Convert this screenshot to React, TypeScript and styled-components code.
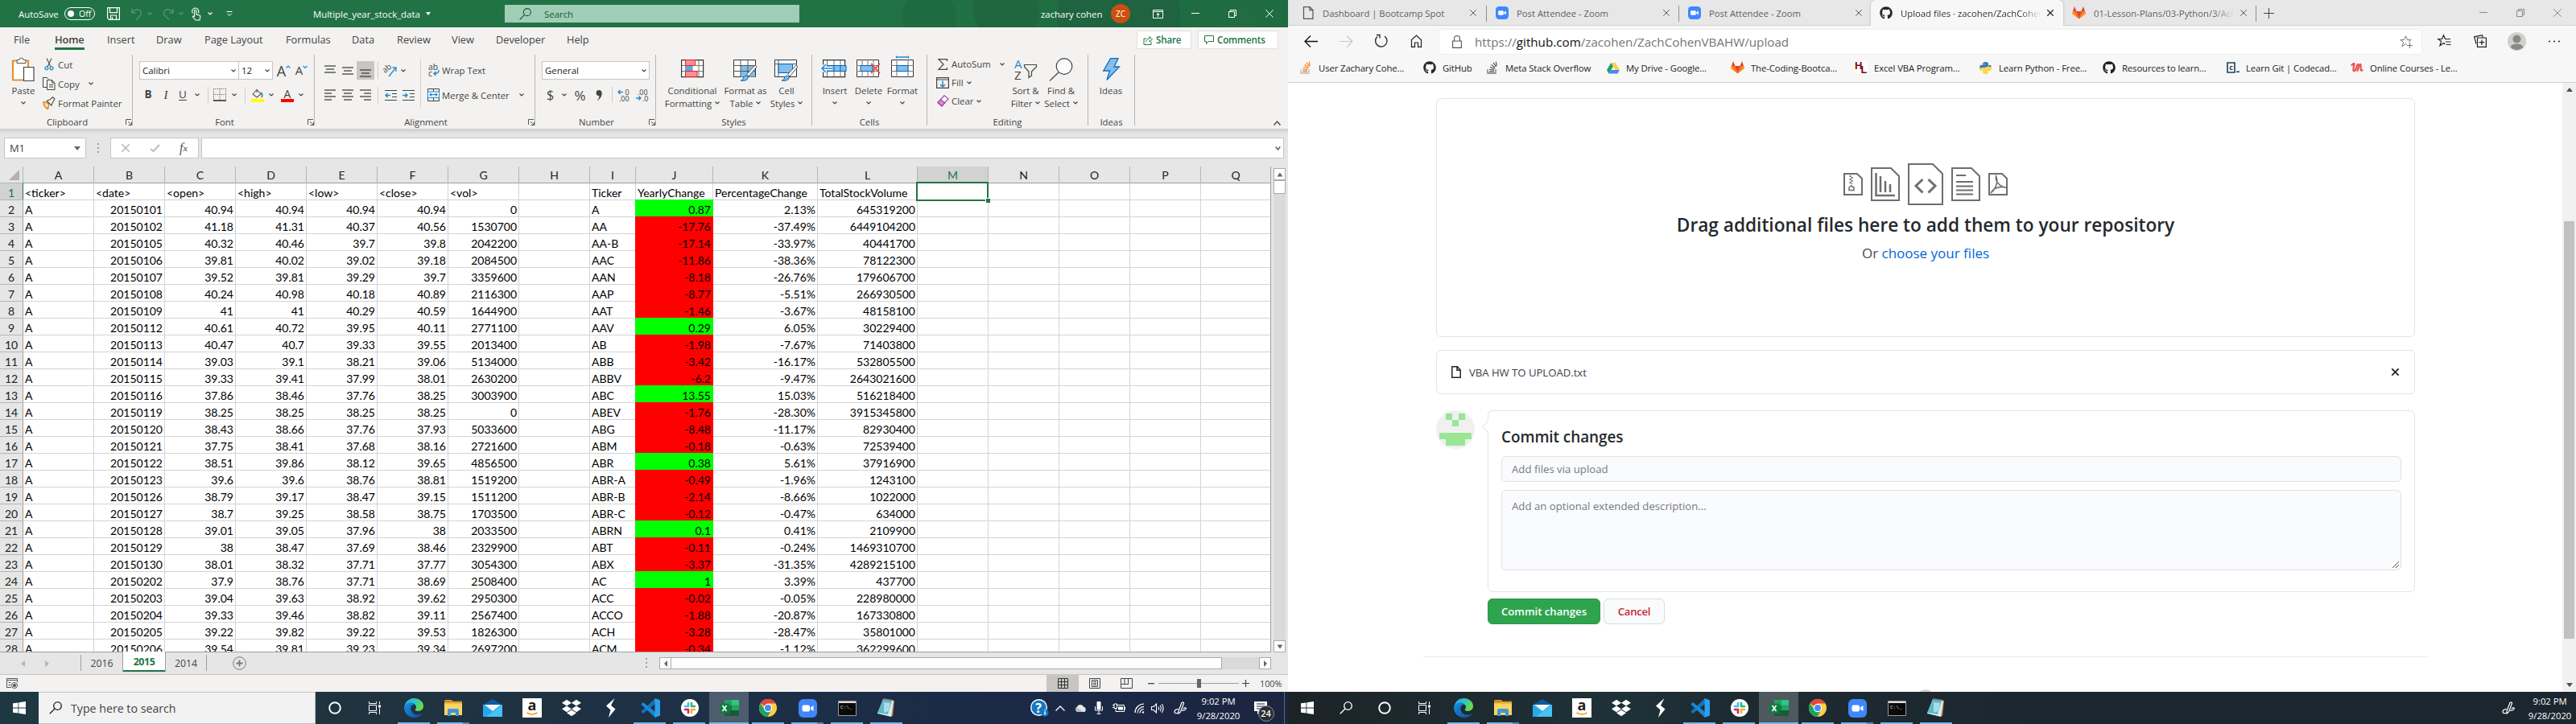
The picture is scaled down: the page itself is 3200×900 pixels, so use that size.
import React from 'react';
import styled, { createGlobalStyle, css } from 'styled-components';
import { FaGithub, FaDropbox, FaPython } from 'react-icons/fa';

const UI = `"Open Sans", "Noto Sans", sans-serif`;
const SHEET = `Lato, "Open Sans", sans-serif`;

const GlobalStyle = createGlobalStyle`
  * { box-sizing: border-box; }
  html, body { margin: 0; padding: 0; }
  body { width: 3200px; height: 900px; overflow: hidden; background: #fff; font-family: ${UI}; font-size: 11.4px; color: #444; }
  svg { display: block; flex: none; overflow: visible; }
`;

/* ---------- shared parts ---------- */

const Desktop = styled.div`
  display: flex;
  width: 3200px;
  height: 900px;
  overflow: hidden;
`;

const Monitor = styled.div`
  display: flex;
  flex-direction: column;
  width: 1600px;
  height: 900px;
  overflow: hidden;
`;

const BarItem = styled.div<{ $w?: number; $lead?: number; $start?: boolean }>`
  display: flex;
  flex: none;
  align-items: center;
  justify-content: ${(p) => (p.$start ? 'flex-start' : 'center')};
  width: ${(p) => (p.$w ? `${p.$w}px` : 'auto')};
  margin-left: ${(p) => p.$lead || 0}px;
  white-space: nowrap;
`;

const Chevron = ({ color = '#444', w = 6, lead = 0 }: { color?: string; w?: number; lead?: number }) => (
  <BarItem $w={w} $lead={lead}>
    <svg width={w} height={w * 0.66} viewBox="0 0 6 4" fill="none" stroke={color} strokeWidth="1.2">
      <path d="M.5 .5 3 3 5.5 .5" />
    </svg>
  </BarItem>
);

/* ---------- Excel title bar ---------- */

const TitleBar = styled.div`
  display: flex;
  align-items: center;
  height: 34px;
  flex: none;
  padding-left: 23px;
  color: #fff;
  background:
    radial-gradient(circle at 1154px 20px, #1e6b41 0 33px, transparent 34px),
    radial-gradient(circle at 1250px 12px, #20663f 0 40px, transparent 41px),
    radial-gradient(circle at 1390px 24px, #1f6340 0 76px, transparent 77px),
    radial-gradient(circle at 1538px 30px, #226c44 0 24px, transparent 25px),
    linear-gradient(90deg, #217346 0 1050px, #1e6e42 1300px, #1f6b42 1600px);
`;

const Toggle = styled.div`
  display: flex;
  align-items: center;
  width: 38px;
  height: 16px;
  margin-left: 7px;
  padding-left: 3px;
  border: 1.5px solid #fff;
  border-radius: 8px;
  font-size: 10.5px;
  line-height: 12px;
`;
const Knob = styled.i`
  width: 8px;
  height: 8px;
  margin-right: 6px;
  border-radius: 50%;
  background: #fff;
`;

const TitleSearch = styled.div`
  display: flex;
  align-items: center;
  width: 366px;
  height: 22px;
  margin-left: 92px;
  padding-left: 18px;
  gap: 16px;
  background: #a0cdb5;
  color: #0f5c34;
`;

const UserBadge = styled.div`
  display: flex;
  align-items: center;
  justify-content: center;
  width: 24px;
  height: 24px;
  margin-left: 11px;
  border-radius: 50%;
  background: #ca5010;
  font-size: 10px;
`;

const Magnifier = ({ size = 15, color = '#0f5c34', sw = 1.2 }: { size?: number; color?: string; sw?: number }) => (
  <svg width={size} height={size} viewBox="0 0 16 16" fill="none" stroke={color} strokeWidth={sw}>
    <circle cx="10.5" cy="5.5" r="4.8" />
    <path d="M7 9 .8 15.2" />
  </svg>
);

const RestoreIcon = ({ color = '#fff' }: { color?: string }) => (
  <svg width="10" height="10" viewBox="0 0 10 10" fill="none" stroke={color}>
    <path d="M.5 2.5h7v7h-7zM2.5 2.5v-2h7v7h-2" />
  </svg>
);
const CrossIcon = ({ color = '#fff', size = 10, sw = 1 }: { color?: string; size?: number; sw?: number }) => (
  <svg width={size} height={size} viewBox="0 0 10 10" fill="none" stroke={color} strokeWidth={sw}>
    <path d="M.3 .3l9.4 9.4M9.7 .3 .3 9.7" />
  </svg>
);
const MinusIcon = ({ color = '#fff' }: { color?: string }) => (
  <svg width="10" height="2" viewBox="0 0 10 2"><path d="M0 0h10v1H0z" fill={color} /></svg>
);

const ExcelTitle = () => (
  <TitleBar>
    <BarItem $w={50} $start>AutoSave</BarItem>
    <Toggle><Knob />Off</Toggle>
    <BarItem $w={16} $lead={15}>
      <svg width="16" height="16" viewBox="0 0 16 16" fill="none" stroke="#fff" strokeWidth="1.2">
        <path d="M.6 .6h14.8v14.8H2.6l-2-2zM3.5 .6v6h9v-6M4.5 15.4V10h7v5.4M6.5 12v3" />
      </svg>
    </BarItem>
    <BarItem $w={14} $lead={14}>
      <svg width="14" height="15" viewBox="0 0 14 15" fill="none" stroke="#5b9a78" strokeWidth="1.2">
        <path d="M1 1v5h5M1.2 5.8C4 1 10 .8 12 4s-1 6-6 10.5" />
      </svg>
    </BarItem>
    <Chevron color="#5b9a78" lead={6} />
    <BarItem $w={14} $lead={13}>
      <svg width="14" height="15" viewBox="0 0 14 15" fill="none" stroke="#5b9a78" strokeWidth="1.2">
        <path d="M13 1v5H8M12.8 5.8C10 1 4 .8 2 4s1 6 6 10.5" />
      </svg>
    </BarItem>
    <Chevron color="#5b9a78" lead={6} />
    <BarItem $w={13} $lead={9}>
      <svg width="13" height="17" viewBox="0 0 13 17" fill="none" stroke="#fff" strokeWidth="1.1">
        <path d="M4.5 12V4.5a1.2 1.2 0 0 1 2.4 0V9l4 1c1 .3 1 1 .9 2l-.8 4H6l-3.5-4c-.6-1 .6-1.7 2 0" />
        <path d="M2.5 7.5a4 4 0 1 1 6.5 0" />
      </svg>
    </BarItem>
    <Chevron color="#fff" lead={8} />
    <BarItem $w={8} $lead={17}>
      <svg width="8" height="7" viewBox="0 0 8 7" fill="none" stroke="#fff"><path d="M.5 .5h7M1.5 3 4 5.5 6.5 3" /></svg>
    </BarItem>
    <BarItem $w={132} $lead={100} $start>Multiple_year_stock_data</BarItem>
    <BarItem $w={7} $lead={7}>
      <svg width="6" height="4" viewBox="0 0 6 4"><path d="M0 0h6L3 4z" fill="#fff" /></svg>
    </BarItem>
    <TitleSearch><Magnifier />Search</TitleSearch>
    <BarItem $w={76} $lead={300} $start>zachary cohen</BarItem>
    <UserBadge>ZC</UserBadge>
    <BarItem $w={13} $lead={28}>
      <svg width="13" height="11" viewBox="0 0 13 11" fill="none" stroke="#fff">
        <path d="M.5 .5h12v10H.5zM.5 2.5h12M6.5 9V4.5M4.5 6.5l2-2 2 2" />
      </svg>
    </BarItem>
    <BarItem $w={10} $lead={35}><MinusIcon /></BarItem>
    <BarItem $w={10} $lead={36}><RestoreIcon /></BarItem>
    <BarItem $w={10} $lead={36}><CrossIcon /></BarItem>
  </TitleBar>
);

/* ---------- Excel ribbon ---------- */

const Ribbon = styled.div`
  display: flex;
  flex-direction: column;
  flex: none;
  height: 126px;
  background: #f3f2f1;
`;
const TabRow = styled.div`
  display: flex;
  align-items: flex-start;
  height: 34px;
  padding: 5px 12px 0 17px;
  font-size: 12.8px;
`;
const RibbonTab = styled.div<{ $w: number; $active?: boolean }>`
  flex: none;
  width: ${(p) => p.$w}px;
  line-height: 21px;
  white-space: nowrap;
  span {
    display: inline-block;
    height: 23px;
    font-weight: ${(p) => (p.$active ? 600 : 400)};
    letter-spacing: ${(p) => (p.$active ? '-0.1px' : '0')};
    border-bottom: ${(p) => (p.$active ? '3px solid #217346' : 'none')};
  }
`;
const RibbonAction = styled.div<{ $w: number; $lead: number }>`
  display: flex;
  align-items: center;
  gap: 4px;
  width: ${(p) => p.$w}px;
  height: 23px;
  margin-left: ${(p) => p.$lead}px;
  margin-top: -1px;
  padding-left: 7px;
  background: #fff;
  border: 1px solid #e1dfdd;
  border-radius: 2px;
  color: #217346;
  font-size: 11.6px;
  font-weight: 600;
  letter-spacing: -0.15px;
`;

const GroupRow = styled.div`
  display: flex;
  height: 88px;
`;
const Group = styled.div<{ $w: number }>`
  display: flex;
  flex-direction: column;
  flex: none;
  width: ${(p) => p.$w}px;
  height: 88px;
  border-right: 1px solid #b8b6b4;
`;
const GroupBody = styled.div<{ $pad?: number }>`
  display: flex;
  flex: none;
  height: 80px;
  padding-left: ${(p) => p.$pad || 0}px;
`;
const GroupLabel = styled.div`
  display: flex;
  align-items: center;
  height: 8px;
  span { flex: 1; text-align: center; font-size: 11.3px; line-height: 8px; }
`;
const Launcher = () => (
  <BarItem $w={8} $lead={-11}>
    <svg width="8" height="8" viewBox="0 0 8 8" fill="none" stroke="#555"><path d="M.5 7V.5H7M3 3l4 4M7.5 3.5v4h-4" /></svg>
  </BarItem>
);

const LargeButton = styled.div<{ $w: number; $lead?: number }>`
  display: flex;
  flex-direction: column;
  align-items: center;
  flex: none;
  width: ${(p) => p.$w}px;
  margin-left: ${(p) => p.$lead || 0}px;
  white-space: nowrap;
`;
const LargeIcon = styled.div`
  display: flex;
  align-items: center;
  justify-content: center;
  height: 36px;
`;
const LargeLine = styled.div`
  display: flex;
  align-items: center;
  gap: 4px;
  height: 16px;
`;
const SmallColumn = styled.div<{ $lead?: number; $rowH: number }>`
  display: grid;
  grid-auto-rows: ${(p) => p.$rowH}px;
  align-content: start;
  margin-left: ${(p) => p.$lead || 0}px;
`;
const SmallButton = styled.div`
  display: flex;
  align-items: center;
  white-space: nowrap;
`;
const ToolRows = styled.div<{ $lead?: number }>`
  display: flex;
  flex-direction: column;
  padding-top: 8px;
  gap: 9px;
  margin-left: ${(p) => p.$lead || 0}px;
`;
const ToolRow = styled.div<{ $h: number }>`
  display: flex;
  align-items: center;
  height: ${(p) => p.$h}px;
`;
const Combo = styled.div<{ $w: number }>`
  display: flex;
  align-items: center;
  justify-content: space-between;
  width: ${(p) => p.$w}px;
  height: 23px;
  padding: 0 3px;
  background: #fff;
  border: 1px solid #c8c6c4;
  color: #222;
  & + & { border-left: 0; }
`;
const ToolDivider = styled.i<{ $h: number; $lead: number; $top?: number }>`
  flex: none;
  width: 1px;
  height: ${(p) => p.$h}px;
  margin-left: ${(p) => p.$lead}px;
  margin-top: ${(p) => p.$top || 0}px;
  background: #d0cecc;
`;
const Glyph = styled.span<{ $size: number; $bold?: boolean; $italic?: boolean; $under?: boolean; $color?: string }>`
  font-size: ${(p) => p.$size}px;
  line-height: 1;
  color: ${(p) => p.$color || '#444'};
  font-weight: ${(p) => (p.$bold ? 700 : 400)};
  font-style: ${(p) => (p.$italic ? 'italic' : 'normal')};
  font-family: ${(p) => (p.$italic ? '"Liberation Serif", serif' : UI)};
  text-decoration: ${(p) => (p.$under ? 'underline' : 'none')};
  text-underline-offset: 2px;
`;
const PressedTool = styled.div`
  display: flex;
  align-items: center;
  justify-content: center;
  width: 22px;
  height: 23px;
  margin-left: 4px;
  background: #c8c6c4;
`;

const Lines = ({ rows, w = 14, h = 12 }: { rows: [number, number, number][]; w?: number; h?: number }) => (
  <svg width={w} height={h} viewBox={`0 0 ${w} ${h}`} stroke="#333" strokeWidth="1.2">
    {rows.map(([x1, x2, y]) => <path key={y} d={`M${x1} ${y}H${x2}`} />)}
  </svg>
);

const Brush = ({ x, y }: { x: number; y: number }) => (
  <g transform={`translate(${x} ${y})`}>
    <path d="M19 0 21 2 11 14 8.5 11.5z" fill="#fff" stroke="#555" />
    <path d="M1 19c3-.5 3-2 4-4.5 1.5-2 4.5-1.5 5 .5 .5 3-3 5-9 4z" fill="#83beec" stroke="#0063b1" />
  </g>
);

const MiniTable = ({ children, off = 0 }: { children?: React.ReactNode; off?: number }) => (
  <svg width="30" height="30" viewBox="0 0 30 30">
    <g transform={`translate(${off} 0)`}>
      <path d="M.5 3.5h27v21H.5z" fill="#fff" />
      <path d="M5.5 3v22M14 3v22M22 3v22M0 10.5h28M0 17.5h28" stroke="#777" fill="none" />
      <path d="M.6 3.6h27v21H.6z" fill="none" stroke="#333" strokeWidth="1.2" />
      {children}
    </g>
  </svg>
);

const ExcelRibbon = () => (
  <Ribbon>
    <TabRow>
      <RibbonTab $w={51}><span>File</span></RibbonTab>
      <RibbonTab $w={65} $active><span>Home</span></RibbonTab>
      <RibbonTab $w={61}><span>Insert</span></RibbonTab>
      <RibbonTab $w={60}><span>Draw</span></RibbonTab>
      <RibbonTab $w={101}><span>Page Layout</span></RibbonTab>
      <RibbonTab $w={82}><span>Formulas</span></RibbonTab>
      <RibbonTab $w={56}><span>Data</span></RibbonTab>
      <RibbonTab $w={68}><span>Review</span></RibbonTab>
      <RibbonTab $w={55}><span>View</span></RibbonTab>
      <RibbonTab $w={88}><span>Developer</span></RibbonTab>
      <RibbonTab $w={40}><span>Help</span></RibbonTab>
      <RibbonAction $w={68} $lead={668}>
        <svg width="12" height="12" viewBox="0 0 12 12" fill="none" stroke="#217346"><path d="M4 4H1v7.5h9V8M3.5 8.5C4 5 6 4 8 4V1.5L11.5 5 8 8V6" /></svg>
        Share
      </RibbonAction>
      <RibbonAction $w={100} $lead={8}>
        <svg width="12" height="11" viewBox="0 0 12 11" fill="none" stroke="#217346"><path d="M.5 .5h11v7H5l-2.5 3v-3h-2z" /></svg>
        Comments
      </RibbonAction>
    </TabRow>
    <GroupRow>
      <Group $w={165}>
        <GroupBody>
          <LargeButton $w={32} $lead={13}>
            <LargeIcon>
              <svg width="30" height="30" viewBox="0 0 30 30" fill="none">
                <path d="M2 4.5h19v24H2z" fill="#fff" stroke="#e8912d" strokeWidth="2.2" />
                <path d="M7 3.5h3a2.5 2.5 0 0 1 5 0h3v4H7z" fill="#fff" stroke="#555" />
                <path d="M15.5 12.5h12.5v17H15.5z" fill="#fff" stroke="#444" strokeWidth="1.2" />
              </svg>
            </LargeIcon>
            <LargeLine>Paste</LargeLine>
            <LargeLine><Chevron /></LargeLine>
          </LargeButton>
          <SmallColumn $lead={8} $rowH={24}>
            <SmallButton>
              <BarItem $w={16}>
                <svg width="12" height="16" viewBox="0 0 12 16" fill="none">
                  <path d="M3 .5 8 11M9 .5 4 11" stroke="#555" strokeWidth="1.2" />
                  <circle cx="2.8" cy="12.8" r="1.9" stroke="#1e8bcd" strokeWidth="1.3" /><circle cx="9" cy="12.8" r="1.9" stroke="#1e8bcd" strokeWidth="1.3" />
                </svg>
              </BarItem>
              <BarItem $lead={3}>Cut</BarItem>
            </SmallButton>
            <SmallButton>
              <BarItem $w={16}>
                <svg width="16" height="16" viewBox="0 0 16 16" fill="none" stroke="#444">
                  <path d="M5 12.5H.5V.5h5l2 2M5.5 3.5h6l3.5 3.5v8.5H5.5zM11.5 3.5V7H15M8 9.5h5M8 12h5" />
                </svg>
              </BarItem>
              <BarItem $lead={3} $w={28} $start>Copy</BarItem>
              <Chevron lead={10} />
            </SmallButton>
            <SmallButton>
              <BarItem $w={16}>
                <svg width="16" height="16" viewBox="0 0 16 16" fill="none">
                  <path d="M1 6.5 8 9l-1.5 6.5C3 14 1 11 1 6.5z" fill="#fbd9a8" stroke="#e07b16" strokeWidth="1.3" />
                  <path d="M5 5.5 11 11l1.5-4L15 3 12.5 .8 9 4z" fill="#fff" stroke="#444" strokeWidth="1.1" />
                </svg>
              </BarItem>
              <BarItem $lead={3}>Format Painter</BarItem>
            </SmallButton>
          </SmallColumn>
        </GroupBody>
        <GroupLabel><span>Clipboard</span><Launcher /></GroupLabel>
      </Group>

      <Group $w={226}>
        <GroupBody $pad={8}>
          <ToolRows>
            <ToolRow $h={23}>
              <Combo $w={124}>Calibri<Chevron /></Combo>
              <Combo $w={42}>12<Chevron /></Combo>
              <BarItem $w={17} $lead={5}>
                <Glyph $size={18}>A</Glyph>
                <svg width="6" height="14" viewBox="0 0 6 14" fill="none" stroke="#1e8bcd" strokeWidth="1.2"><path d="M.5 3.5 3 1l2.5 2.5" /></svg>
              </BarItem>
              <BarItem $w={15} $lead={6}>
                <Glyph $size={15}>A</Glyph>
                <svg width="6" height="14" viewBox="0 0 6 14" fill="none" stroke="#1e8bcd" strokeWidth="1.2"><path d="M.5 1 3 3.5 5.5 1" /></svg>
              </BarItem>
            </ToolRow>
            <ToolRow $h={20}>
              <BarItem $w={8} $lead={7}><Glyph $size={13.5} $bold>B</Glyph></BarItem>
              <BarItem $w={8} $lead={14}><Glyph $size={15} $italic>I</Glyph></BarItem>
              <BarItem $w={10} $lead={12}><Glyph $size={13.5} $under>U</Glyph></BarItem>
              <Chevron lead={10} />
              <ToolDivider $h={20} $lead={10} />
              <BarItem $w={16} $lead={6}>
                <svg width="16" height="16" viewBox="0 0 16 16" fill="none" stroke="#444">
                  <path d="M0 .5h16M.5 0v14M15.5 0v14M8 0v14M0 7.5h16" strokeDasharray="1 1.5" />
                  <path d="M0 15h16" strokeWidth="1.8" />
                </svg>
              </BarItem>
              <Chevron lead={7} />
              <ToolDivider $h={20} $lead={10} />
              <BarItem $w={16} $lead={7}>
                <svg width="16" height="17" viewBox="0 0 16 17" fill="none">
                  <path d="M2 7 7 1.5 12 7 7 11z M7 1.5V5" stroke="#555" strokeWidth="1.1" />
                  <path d="M12 5c2 1.5 2 4 1 6" stroke="#1e8bcd" strokeWidth="1.7" />
                  <path d="M0 13h16v4H0z" fill="#ff0" />
                </svg>
              </BarItem>
              <Chevron lead={6} />
              <BarItem $w={16} $lead={9}>
                <svg width="16" height="17" viewBox="0 0 16 17">
                  <text x="8" y="11.5" textAnchor="middle" fontSize="14" fill="#444">A</text>
                  <path d="M0 13h16v4H0z" fill="#f00" />
                </svg>
              </BarItem>
              <Chevron lead={6} />
            </ToolRow>
          </ToolRows>
        </GroupBody>
        <GroupLabel><span>Font</span><Launcher /></GroupLabel>
      </Group>

      <Group $w={274}>
        <GroupBody $pad={12}>
          <ToolRows>
            <ToolRow $h={23}>
              <BarItem $w={14}><Lines rows={[[0, 14, 0], [2, 12, 4], [0, 14, 8]]} /></BarItem>
              <BarItem $w={14} $lead={8}><Lines rows={[[0, 14, 2], [2, 12, 6], [0, 14, 10]]} /></BarItem>
              <PressedTool><Lines rows={[[0, 14, 5], [2, 12, 9], [0, 14, 13]]} /></PressedTool>
              <ToolDivider $h={21} $lead={4} />
              <BarItem $w={16} $lead={7}>
                <svg width="16" height="17" viewBox="0 0 16 17" fill="none">
                  <text x="0" y="9" fontSize="10" fill="#444" transform="rotate(-40 5 9)">ab</text>
                  <path d="M6 16 15 5M15 10V5h-4.5" stroke="#1e8bcd" strokeWidth="1.3" />
                </svg>
              </BarItem>
              <Chevron lead={5} />
            </ToolRow>
            <ToolRow $h={20}>
              <BarItem $w={14}><Lines rows={[[0, 14, 0], [0, 9, 4], [0, 14, 8], [0, 9, 12]]} /></BarItem>
              <BarItem $w={14} $lead={8}><Lines rows={[[0, 14, 0], [2, 12, 4], [0, 14, 8], [2, 12, 12]]} /></BarItem>
              <BarItem $w={14} $lead={8}><Lines rows={[[0, 14, 0], [5, 14, 4], [0, 14, 8], [5, 14, 12]]} /></BarItem>
              <ToolDivider $h={21} $lead={8} />
              <BarItem $w={15} $lead={8}>
                <svg width="15" height="13" viewBox="0 0 15 13" fill="none">
                  <path d="M0 .5h15M9 4.5h6M9 8.5h6M0 12.5h15" stroke="#444" />
                  <path d="M7 6.5H1M3.5 4 1 6.5 3.5 9" stroke="#1e8bcd" strokeWidth="1.4" />
                </svg>
              </BarItem>
              <BarItem $w={15} $lead={7}>
                <svg width="15" height="13" viewBox="0 0 15 13" fill="none">
                  <path d="M0 .5h15M9 4.5h6M9 8.5h6M0 12.5h15" stroke="#444" />
                  <path d="M0 6.5h6M3.5 4 6 6.5 3.5 9" stroke="#1e8bcd" strokeWidth="1.4" />
                </svg>
              </BarItem>
            </ToolRow>
          </ToolRows>
          <ToolDivider $h={59} $lead={7} $top={6} />
          <ToolRows $lead={8}>
            <ToolRow $h={23}>
              <BarItem $w={15}>
                <svg width="14" height="18" viewBox="0 0 14 18" fill="none">
                  <text x="0" y="8" fontSize="10.5" fill="#444">ab</text>
                  <text x="0" y="16" fontSize="10.5" fill="#444">c</text>
                  <path d="M13 8c.5 3-1.5 4.5-6 4.500M9.5 10 7 12.500 9.5 15" stroke="#1e8bcd" strokeWidth="1.4" />
                </svg>
              </BarItem>
              <BarItem $lead={3}>Wrap Text</BarItem>
            </ToolRow>
            <ToolRow $h={20}>
              <BarItem $w={15}>
                <svg width="15" height="16" viewBox="0 0 15 16" fill="none">
                  <path d="M.5 .5h14v15H.5zM7.5 0v4M7.5 12v4" stroke="#444" />
                  <path d="M.5 4h14v7.5H.5z" fill="#fff" stroke="#1e8bcd" />
                  <path d="M3 7.7h9M5 5.7l-2 2 2 2M10 5.7l2 2-2 2" stroke="#1e8bcd" strokeWidth="1.2" />
                </svg>
              </BarItem>
              <BarItem $lead={3} $w={86} $start>Merge &amp; Center</BarItem>
              <Chevron lead={10} />
            </ToolRow>
          </ToolRows>
        </GroupBody>
        <GroupLabel><span>Alignment</span><Launcher /></GroupLabel>
      </Group>

      <Group $w={150}>
        <GroupBody $pad={8}>
          <ToolRows>
            <ToolRow $h={23}><Combo $w={134}>General<Chevron /></Combo></ToolRow>
            <ToolRow $h={20}>
              <BarItem $w={9} $lead={6}><Glyph $size={16}>$</Glyph></BarItem>
              <Chevron lead={10} />
              <BarItem $w={15} $lead={9}><Glyph $size={17}>%</Glyph></BarItem>
              <BarItem $w={8} $lead={12}>
                <svg width="8" height="13" viewBox="0 0 8 13"><path d="M4 0a3.5 3.5 0 0 1 3.7 3.7C7.7 8 5 11.5 1.5 13 4 10.5 4.5 8.5 4.5 7.2A3.6 3.6 0 1 1 4 0z" fill="#444" /></svg>
              </BarItem>
              <ToolDivider $h={20} $lead={12} />
              <BarItem $w={16} $lead={6}>
                <svg width="16" height="16" viewBox="0 0 16 16" fill="none">
                  <path d="M7 4.5H1M3.5 2 1 4.5 3.5 7" stroke="#1e8bcd" strokeWidth="1.3" />
                  <text x="9.5" y="7.5" fontSize="9" fill="#444">0</text><text x="2" y="16" fontSize="9" fill="#444">.00</text>
                </svg>
              </BarItem>
              <BarItem $w={16} $lead={7}>
                <svg width="16" height="16" viewBox="0 0 16 16" fill="none">
                  <path d="M0 12h6M3.5 9.5 6 12l-2.500 2.500" stroke="#1e8bcd" strokeWidth="1.3" />
                  <text x="2" y="7.5" fontSize="9" fill="#444">.00</text><text x="8" y="16" fontSize="9" fill="#444">.0</text>
                </svg>
              </BarItem>
            </ToolRow>
          </ToolRows>
        </GroupBody>
        <GroupLabel><span>Number</span><Launcher /></GroupLabel>
      </Group>

      <Group $w={194}>
        <GroupBody>
          <LargeButton $w={70} $lead={10}>
            <LargeIcon>
              <MiniTable off={1}>
                <path d="M5.5 3.5h12v7h-12zM5.5 17.5H20v7H5.5z" fill="#ff8d92" stroke="#d62a2a" />
                <path d="M5.5 11H14v6H5.5z" fill="#5ba9e6" />
              </MiniTable>
            </LargeIcon>
            <LargeLine>Conditional</LargeLine>
            <LargeLine>Formatting<Chevron /></LargeLine>
          </LargeButton>
          <LargeButton $w={56} $lead={3}>
            <LargeIcon>
              <svg width="30" height="30" viewBox="0 0 30 30">
                <path d="M.5 3.5h27v21H.5z" fill="#fff" stroke="#333" />
                <path d="M9 10.5h18v14H9z" fill="#83beec" />
                <path d="M9 3v22M18 3v22M0 10.5h28M0 17.5h28" stroke="#555" />
                <Brush x={8} y={10} />
              </svg>
            </LargeIcon>
            <LargeLine>Format as</LargeLine>
            <LargeLine>Table<Chevron /></LargeLine>
          </LargeButton>
          <LargeButton $w={44} $lead={1}>
            <LargeIcon>
              <svg width="30" height="30" viewBox="0 0 30 30">
                <path d="M.5 3.5h27v21H.5z" fill="#fff" stroke="#333" />
                <path d="M5 3v22M0 8.5h28" stroke="#555" />
                <path d="M5 8.5h17.5v11H5z" fill="#83beec" stroke="#0063b1" />
                <Brush x={8} y={10} />
              </svg>
            </LargeIcon>
            <LargeLine>Cell</LargeLine>
            <LargeLine>Styles<Chevron /></LargeLine>
          </LargeButton>
        </GroupBody>
        <GroupLabel><span>Styles</span></GroupLabel>
      </Group>

      <Group $w={143}>
        <GroupBody>
          <LargeButton $w={34} $lead={11}>
            <LargeIcon>
              <MiniTable>
                <path d="M5 10.5h24v7H5z" fill="#83beec" stroke="#0063b1" />
                <path d="M14 10.5v7M22 10.5v7" stroke="#0063b1" />
                <path d="M12 14H-1M4 9-1 14 4 19" stroke="#fff" strokeWidth="4" fill="none" />
                <path d="M12 14H-1M4 9-1 14 4 19" stroke="#1e8bcd" strokeWidth="1.6" fill="none" />
              </MiniTable>
            </LargeIcon>
            <LargeLine>Insert</LargeLine>
            <LargeLine><Chevron /></LargeLine>
          </LargeButton>
          <LargeButton $w={38} $lead={6}>
            <LargeIcon>
              <svg width="30" height="30" viewBox="0 0 30 30">
                <path d="M.5 3.5h27v21H.5z" fill="#fff" stroke="#333" />
                <path d="M7 3v22M14 3v22M21 3v22M0 10.5h28M0 17.5h28" stroke="#777" />
                <path d="M5 10.5h15v7H5z" fill="#83beec" stroke="#0063b1" />
                <path d="m18 8 11 12M29 8 18 20" stroke="#e8413c" strokeWidth="1.7" />
              </svg>
            </LargeIcon>
            <LargeLine>Delete</LargeLine>
            <LargeLine><Chevron /></LargeLine>
          </LargeButton>
          <LargeButton $w={40} $lead={3}>
            <LargeIcon>
              <svg width="30" height="30" viewBox="0 0 30 30">
                <path d="M1.5 3.5h27v21h-27z" fill="#fff" stroke="#333" />
                <path d="M8 3v22M22 3v22M1 10.5h28M1 17.5h28" stroke="#777" />
                <path d="M8 10.5h14v7H8z" fill="#83beec" stroke="#0063b1" />
                <path d="M7.5 0h15M7.5-1.500v3M22.500-1.500v3" stroke="#1e8bcd" strokeWidth="1.3" />
              </svg>
            </LargeIcon>
            <LargeLine>Format</LargeLine>
            <LargeLine><Chevron /></LargeLine>
          </LargeButton>
        </GroupBody>
        <GroupLabel><span>Cells</span></GroupLabel>
      </Group>

      <Group $w={200}>
        <GroupBody>
          <SmallColumn $lead={11} $rowH={23}>
            <SmallButton>
              <BarItem $w={16}>
                <svg width="12" height="14" viewBox="0 0 12 14" fill="none" stroke="#444" strokeWidth="1.2"><path d="M11.5 3V.7H1L7 7 1 13.3h10.5V11" /></svg>
              </BarItem>
              <BarItem $w={50} $lead={3} $start>AutoSum</BarItem>
              <Chevron lead={10} />
            </SmallButton>
            <SmallButton>
              <BarItem $w={16}>
                <svg width="16" height="14" viewBox="0 0 16 14" fill="none"><path d="M.6 .6h14.8v12.8H.6zM.6 3h14.8" stroke="#444" strokeWidth="1.2" /><path d="M8 4.5v7M5 9l3 3 3-3" stroke="#1e8bcd" strokeWidth="1.5" /></svg>
              </BarItem>
              <BarItem $lead={3}>Fill</BarItem><Chevron lead={4} />
            </SmallButton>
            <SmallButton>
              <BarItem $w={16}>
                <svg width="15" height="15" viewBox="0 0 15 15" fill="none"><path d="M1 9.5 9 .8l5 4-8 9z" fill="#fff" stroke="#a43ea8" strokeWidth="1.2" /><path d="M1 9.5 4.5 5.7 9.7 9.8 6 13.8z" fill="#d58cd8" stroke="#a43ea8" strokeWidth="1.2" /></svg>
              </BarItem>
              <BarItem $lead={3}>Clear</BarItem><Chevron lead={4} />
            </SmallButton>
          </SmallColumn>
          <LargeButton $w={38} $lead={7}>
            <LargeIcon>
              <svg width="28" height="28" viewBox="0 0 28 28" fill="none">
                <text x="0" y="13" fontSize="15" fill="#1e8bcd">A</text>
                <text x="0" y="27" fontSize="15" fill="#444">Z</text>
                <path d="M12.5 8.5h15v2.5l-6 6V22l-3.500 2.500V17l-5.500-6z" stroke="#444" strokeWidth="1.2" />
              </svg>
            </LargeIcon>
            <LargeLine>Sort &amp;</LargeLine>
            <LargeLine>Filter<Chevron /></LargeLine>
          </LargeButton>
          <LargeButton $w={42} $lead={4}>
            <LargeIcon>
              <svg width="30" height="29" viewBox="0 0 30 29" fill="none" stroke="#444" strokeWidth="1.2"><circle cx="19" cy="10.5" r="9.8" fill="#fbfbfb" /><path d="M12 18 1 28.5" /></svg>
            </LargeIcon>
            <LargeLine>Find &amp;</LargeLine>
            <LargeLine>Select<Chevron /></LargeLine>
          </LargeButton>
        </GroupBody>
        <GroupLabel><span>Editing</span></GroupLabel>
      </Group>

      <Group $w={58}>
        <GroupBody>
          <LargeButton $w={56}>
            <LargeIcon>
              <svg width="21" height="28" viewBox="0 0 21 28"><path d="M9.5 .7h9.5L14 11h6.5L5 27.300 8.5 16H.7z" fill="#83beec" stroke="#0f6cbd" strokeWidth="1.3" /></svg>
            </LargeIcon>
            <LargeLine>Ideas</LargeLine>
          </LargeButton>
        </GroupBody>
        <GroupLabel><span>Ideas</span></GroupLabel>
      </Group>
      <BarItem $w={9} $lead={172}>
        <svg width="9" height="80" viewBox="0 0 9 80" fill="none" stroke="#444" strokeWidth="1.3"><path d="M.5 83.5 4.5 79l4 4.5" /></svg>
      </BarItem>
    </GroupRow>
  </Ribbon>
);

/* ---------- formula bar ---------- */

const FormulaBar = styled.div`
  display: flex;
  flex: none;
  height: 47px;
  padding: 11px 5px 0;
  background: linear-gradient(#cfcfcf, #e6e6e6 7px);
`;
const Field = styled.div<{ $w: number; $lead?: number }>`
  display: flex;
  align-items: center;
  width: ${(p) => p.$w}px;
  height: 26px;
  margin-left: ${(p) => p.$lead || 0}px;
  background: #fff;
  border: 1px solid #c6c6c6;
`;
const NameBox = styled(Field)`
  justify-content: space-between;
  padding: 0 6px;
  font-size: 13px;
  letter-spacing: -0.3px;
`;
const Grip = styled.i<{ $lead: number; $top: number }>`
  width: 2px;
  height: 12px;
  margin: ${(p) => p.$top}px 0 0 ${(p) => p.$lead}px;
  background: repeating-linear-gradient(#a0a0a0 0 2px, transparent 2px 5px);
`;

const Formula = () => (
  <FormulaBar>
    <NameBox $w={102}>
      M1
      <svg width="8" height="5" viewBox="0 0 8 5"><path d="M0 0h8L4 5z" fill="#666" /></svg>
    </NameBox>
    <Grip $lead={14} $top={7} />
    <Field $w={110} $lead={14}>
      <BarItem $w={12} $lead={12}><CrossIcon color="#b5b5b5" sw={1.5} /></BarItem>
      <BarItem $w={14} $lead={23}>
        <svg width="13" height="10" viewBox="0 0 13 10" fill="none" stroke="#bdbdbd" strokeWidth="2"><path d="M1 6l3.500 3L12 1" /></svg>
      </BarItem>
      <BarItem $lead={24}><Glyph $size={16} $italic $color="#555">f</Glyph><Glyph $size={11} $italic $bold $color="#666">x</Glyph></BarItem>
    </Field>
    <Field $w={1345} $lead={3}>
      <BarItem $w={8} $lead={1332}>
        <svg width="7" height="5" viewBox="0 0 7 5" fill="none" stroke="#666" strokeWidth="1.6"><path d="M.7 .5 3.5 4 6.3 .5" /></svg>
      </BarItem>
    </Field>
  </FormulaBar>
);

/* ---------- sheet grid ---------- */

const COLUMNS: [string, number][] = [
  ['A', 88], ['B', 88], ['C', 88], ['D', 88], ['E', 88], ['F', 88], ['G', 88], ['H', 88],
  ['I', 57], ['J', 96], ['K', 130], ['L', 124], ['M', 88], ['N', 88], ['O', 88], ['P', 88], ['Q', 87],
];
const TEMPLATE = `28px ${COLUMNS.map(([, w]) => `${w}px`).join(' ')}`;

const HEADERS = ['<ticker>', '<date>', '<open>', '<high>', '<low>', '<close>', '<vol>', '', 'Ticker', 'YearlyChange', 'PercentageChange', 'TotalStockVolume'];

const DATA = `20150101 40.94 40.94 40.94 40.94 0 A 0.87 2.13% 645319200
20150102 41.18 41.31 40.37 40.56 1530700 AA -17.76 -37.49% 6449104200
20150105 40.32 40.46 39.7 39.8 2042200 AA-B -17.14 -33.97% 40441700
20150106 39.81 40.02 39.02 39.18 2084500 AAC -11.86 -38.36% 78122300
20150107 39.52 39.81 39.29 39.7 3359600 AAN -8.18 -26.76% 179606700
20150108 40.24 40.98 40.18 40.89 2116300 AAP -8.77 -5.51% 266930500
20150109 41 41 40.29 40.59 1644900 AAT -1.46 -3.67% 48158100
20150112 40.61 40.72 39.95 40.11 2771100 AAV 0.29 6.05% 30229400
20150113 40.47 40.7 39.33 39.55 2013400 AB -1.98 -7.67% 71403800
20150114 39.03 39.1 38.21 39.06 5134000 ABB -3.42 -16.17% 532805500
20150115 39.33 39.41 37.99 38.01 2630200 ABBV -6.2 -9.47% 2643021600
20150116 37.86 38.46 37.76 38.25 3003900 ABC 13.55 15.03% 516218400
20150119 38.25 38.25 38.25 38.25 0 ABEV -1.76 -28.30% 3915345800
20150120 38.43 38.66 37.76 37.93 5033600 ABG -8.48 -11.17% 82930400
20150121 37.75 38.41 37.68 38.16 2721600 ABM -0.18 -0.63% 72539400
20150122 38.51 39.86 38.12 39.65 4856500 ABR 0.38 5.61% 37916900
20150123 39.6 39.6 38.76 38.81 1519200 ABR-A -0.49 -1.96% 1243100
20150126 38.79 39.17 38.47 39.15 1511200 ABR-B -2.14 -8.66% 1022000
20150127 38.7 39.25 38.58 38.75 1703500 ABR-C -0.12 -0.47% 634000
20150128 39.01 39.05 37.96 38 2033500 ABRN 0.1 0.41% 2109900
20150129 38 38.47 37.69 38.46 2329900 ABT -0.11 -0.24% 1469310700
20150130 38.01 38.32 37.71 37.77 3054300 ABX -3.37 -31.35% 4289215100
20150202 37.9 38.76 37.71 38.69 2508400 AC 1 3.39% 437700
20150203 39.04 39.63 38.92 39.62 2950300 ACC -0.02 -0.05% 228980000
20150204 39.33 39.46 38.82 39.11 2567400 ACCO -1.88 -20.87% 167330800
20150205 39.22 39.82 39.22 39.53 1826300 ACH -3.28 -28.47% 35801000
20150206 39.54 39.81 39.23 39.34 2697200 ACM -0.34 -1.12% 362299600`.split('\n').map((line) => line.split(' '));

const SheetArea = styled.div`
  display: flex;
  flex: none;
  height: 604px;
  background: #e6e6e6;
  font-family: ${SHEET};
  font-size: 14px;
`;
const Sheet = styled.div`
  width: 1579px;
  height: 604px;
  overflow: hidden;
  border-right: 1px solid #9f9f9f;
  border-bottom: 1px solid #9f9f9f;
`;
const HeadRow = styled.div`
  display: grid;
  grid-template-columns: ${TEMPLATE};
  height: 20px;
`;
const ColumnHead = styled.div<{ $selected?: boolean }>`
  display: flex;
  align-items: center;
  justify-content: center;
  padding-top: 1px;
  border-left: 1px solid #b5b5b5;
  background: ${(p) => (p.$selected ? '#d2d2d2' : '#e6e6e6')};
  color: ${(p) => (p.$selected ? '#217346' : '#222')};
`;
const SelectAll = styled.div`
  display: flex;
  align-items: flex-end;
  justify-content: flex-end;
  padding: 0 4px 3px 0;
`;
const SheetRow = styled.div`
  display: grid;
  grid-template-columns: ${TEMPLATE};
  height: 21px;
`;
const RowHead = styled.div<{ $selected?: boolean }>`
  display: flex;
  align-items: center;
  justify-content: center;
  padding-top: 2px;
  border-top: 1px solid #b5b5b5;
  background: ${(p) => (p.$selected ? '#d2d2d2' : '#e6e6e6')};
  color: ${(p) => (p.$selected ? '#217346' : '#222')};
`;
const SheetCell = styled.div<{ $right?: boolean; $fill?: string; $first?: boolean; $edge?: string }>`
  position: relative;
  display: flex;
  align-items: center;
  justify-content: ${(p) => (p.$right ? 'flex-end' : 'flex-start')};
  padding: 2px 2px 0;
  background: #fff;
  border-top: 1px solid ${(p) => (p.$first ? '#9f9f9f' : '#d4d4d4')};
  border-left: 1px solid ${(p) => p.$edge || '#d4d4d4'};
  color: #000;
  white-space: nowrap;
  ${(p) => p.$fill && css`
    background: ${p.$fill};
    border-color: ${p.$fill};
    box-shadow: 1px 0 0 ${p.$fill};
    z-index: 1;
  `}
`;
const CellCursor = styled.div`
  position: absolute;
  left: -2px;
  top: -2px;
  width: 90px;
  height: 24px;
  z-index: 2;
  border: 2px solid #217346;
  &::after {
    content: '';
    position: absolute;
    right: -4px;
    bottom: -4px;
    width: 5px;
    height: 5px;
    background: #217346;
    border: solid #fff;
    border-width: 1px 0 0 1px;
    box-sizing: content-box;
  }
`;

const VScroll = styled.div`
  display: flex;
  flex-direction: column;
  width: 15px;
  margin: 2px 0 0 3px;
`;
const ScrollKey = styled.div`
  display: flex;
  align-items: center;
  justify-content: center;
  flex: none;
  width: 15px;
  height: 15px;
  background: #fff;
  border: 1px solid #ababab;
`;
const VThumb = styled.div`
  height: 17px;
  background: #fff;
  border: 1px solid #ababab;
`;
const VTrack = styled.div`
  flex: 1;
  background: #dadada;
`;
const Arrow = ({ d, fill = '#666' }: { d: string; fill?: string }) => (
  <svg width="8" height="8" viewBox="0 0 8 8"><path d={d} fill={fill} /></svg>
);

const Worksheet = () => (
  <SheetArea>
    <Sheet>
      <HeadRow>
        <SelectAll><svg width="13" height="13" viewBox="0 0 13 13"><path d="M13 0v13H0z" fill="#b1b1b1" /></svg></SelectAll>
        {COLUMNS.map(([name]) => <ColumnHead key={name} $selected={name === 'M'}>{name}</ColumnHead>)}
      </HeadRow>
      <SheetRow>
        <RowHead $selected>1</RowHead>
        {COLUMNS.map(([name], i) => (
          <SheetCell key={name} $first $edge={i === 0 ? '#217346' : undefined}>
            {HEADERS[i]}
            {name === 'M' && <CellCursor />}
          </SheetCell>
        ))}
      </SheetRow>
      {DATA.map((row, r) => {
        const values = ['A', ...row.slice(0, 6), '', ...row.slice(6)];
        return (
          <SheetRow key={r}>
            <RowHead>{r + 2}</RowHead>
            {COLUMNS.map(([name], i) => (
              <SheetCell
                key={name}
                $right={i !== 0 && i !== 8}
                $edge={i === 0 ? '#9f9f9f' : undefined}
                $fill={i === 9 ? (values[9].startsWith('-') ? '#ff0000' : '#00ff00') : undefined}
              >
                {values[i]}
              </SheetCell>
            ))}
          </SheetRow>
        );
      })}
    </Sheet>
    <VScroll>
      <ScrollKey><Arrow d="M4 1.500 7.500 6.500h-7z" /></ScrollKey>
      <VThumb />
      <VTrack />
      <ScrollKey><Arrow d="M4 6.500 .5 1.500h7z" /></ScrollKey>
    </VScroll>
  </SheetArea>
);

const SheetTabs = styled.div`
  display: flex;
  flex: none;
  height: 28px;
  background: #e6e6e6;
  border-bottom: 1px solid #c6c6c6;
  font-size: 12.3px;
`;
const SheetTab = styled.div<{ $w: number; $active?: boolean }>`
  display: flex;
  align-items: center;
  justify-content: center;
  width: ${(p) => p.$w}px;
  height: ${(p) => (p.$active ? 25 : 24)}px;
  margin-top: ${(p) => (p.$active ? -1 : 1)}px;
  ${(p) => p.$active && css`
    background: #fff;
    border: solid #9f9f9f;
    border-width: 0 1px;
    box-shadow: inset 0 -2px 0 #217346;
    color: #217346;
    font-weight: 700;
    letter-spacing: -0.4px;
  `}
`;
const TabEdge = styled.i`
  width: 1px;
  height: 20px;
  margin-top: 3px;
  background: #9f9f9f;
`;
const HScroll = styled.div`
  display: flex;
  align-items: stretch;
  height: 15px;
  width: 760px;
  margin: 6px 0 0 15px;
  background: #dadada;
`;
const HThumb = styled.div`
  width: 685px;
  margin-left: -1px;
  background: #fff;
  border: 1px solid #ababab;
`;
const HGap = styled.div`flex: 1;`;

const StatusBar = styled.div`
  display: flex;
  align-items: center;
  flex: none;
  height: 21px;
  padding-left: 8px;
  background: #f3f2f1;
  font-size: 10.8px;
`;
const ViewMode = styled.div<{ $w: number; $lead: number; $active?: boolean }>`
  display: flex;
  align-items: center;
  justify-content: center;
  width: ${(p) => p.$w}px;
  height: 21px;
  margin-left: ${(p) => p.$lead}px;
  background: ${(p) => (p.$active ? '#c8c6c4' : 'transparent')};
`;
const ZoomTrack = styled.div`
  display: flex;
  align-items: center;
  width: 100px;
  height: 1px;
  margin-left: 5px;
  padding-left: 48px;
  background: #a0a0a0;
  i { flex: none; width: 5px; height: 11px; background: #666; }
`;

const ExcelFooter = () => (
  <>
    <SheetTabs>
      <BarItem $w={6} $lead={26}><Arrow d="M6 0v8L1 4z" fill="#b5b5b5" /></BarItem>
      <BarItem $w={6} $lead={23}><Arrow d="M2 0v8l5-4z" fill="#b5b5b5" /></BarItem>
      <BarItem $lead={39} />
      <TabEdge />
      <SheetTab $w={51}>2016</SheetTab>
      <SheetTab $w={54} $active>2015</SheetTab>
      <SheetTab $w={50}>2014</SheetTab>
      <TabEdge />
      <BarItem $w={16} $lead={32}>
        <svg width="17" height="17" viewBox="0 0 17 17" fill="none" stroke="#777"><circle cx="8.5" cy="8.5" r="7.8" /><path d="M8.5 4.5v8M4.5 8.5h8" strokeWidth="1.8" /></svg>
      </BarItem>
      <Grip $lead={497} $top={7} />
      <HScroll>
        <ScrollKey><Arrow d="M6 0v8L2 4z" /></ScrollKey>
        <HThumb />
        <HGap />
        <ScrollKey><Arrow d="M2 0v8l4-4z" /></ScrollKey>
      </HScroll>
    </SheetTabs>
    <StatusBar>
      <svg width="14" height="13" viewBox="0 0 14 13" fill="none" stroke="#555">
        <path d="M6 11.5H.5v-11h13V5M0 2.5h14M2.5 5.5h3M2.5 8.5h3" /><circle cx="10" cy="9" r="3.5" fill="#f3f2f1" /><circle cx="10" cy="9" r="1.5" fill="#555" />
      </svg>
      <ViewMode $w={40} $lead={1278} $active>
        <svg width="13" height="13" viewBox="0 0 13 13" fill="none" stroke="#333"><path d="M.5 .5h12v12H.5zM4.5 0v13M8.5 0v13M0 4.5h13M0 8.5h13" /></svg>
      </ViewMode>
      <ViewMode $w={14} $lead={13}>
        <svg width="14" height="13" viewBox="0 0 14 13" fill="none" stroke="#444"><path d="M.5 .5h13v12H.5zM3.5 2.5h7v8h-7zM5 4.5h4M5 6.5h4M5 8.5h4" /></svg>
      </ViewMode>
      <ViewMode $w={15} $lead={25}>
        <svg width="15" height="13" viewBox="0 0 15 13" fill="none" stroke="#444"><path d="M.5 .5h14v12H.5zM.5 7.5h9V.5M5 .5v7" /></svg>
      </ViewMode>
      <BarItem $w={8} $lead={19}><svg width="8" height="2" viewBox="0 0 8 2"><path d="M0 0h8v1.3H0z" fill="#444" /></svg></BarItem>
      <ZoomTrack><i /></ZoomTrack>
      <BarItem $w={9} $lead={4}><svg width="9" height="9" viewBox="0 0 9 9"><path d="M0 4.5h9M4.5 0v9" stroke="#444" strokeWidth="1.2" /></svg></BarItem>
      <BarItem $lead={13}>100%</BarItem>
    </StatusBar>
  </>
);

/* ---------- taskbar ---------- */

const TaskbarRoot = styled.div<{ $bg: string }>`
  display: flex;
  align-items: stretch;
  flex: none;
  height: 40px;
  background: ${(p) => p.$bg};
  color: #fff;
`;
const TaskSearch = styled.div`
  display: flex;
  align-items: center;
  width: 344px;
  padding-left: 13px;
  gap: 11px;
  background: #f2f2f2;
  border: 1px solid #bfc3c4;
  border-width: 1px 1px 1px 0;
  color: #444;
  font-size: 14.2px;
`;
const TaskApp = styled.div<{ $open?: boolean; $active?: boolean; $multi?: boolean }>`
  display: flex;
  align-items: center;
  justify-content: center;
  flex: none;
  width: 48.9px;
  background-color: ${(p) => (p.$active ? 'rgba(255,255,255,.22)' : 'transparent')};
  background-image: ${(p) => (p.$open ? `linear-gradient(90deg, #76b9ed 0 ${p.$multi ? 32 : 40}px, #5588b3 ${p.$multi ? 32 : 40}px)` : 'none')};
  background-repeat: no-repeat;
  background-position: 4px 38px;
  background-size: 40px 2px;
  ${(p) => p.$active && css`background-position: 0 38px; background-size: 49px 2px; background-image: linear-gradient(#76b9ed, #76b9ed);`}
`;
const SystemKey = styled.div<{ $w: number }>`
  display: flex;
  align-items: center;
  justify-content: center;
  flex: none;
  width: ${(p) => p.$w}px;
`;
const AmazonTile = styled.div`
  display: flex;
  align-items: center;
  justify-content: center;
  width: 24px;
  height: 24px;
  background: #fff;
`;
const Clock = styled.div<{ $lead: number }>`
  display: flex;
  flex-direction: column;
  align-items: center;
  justify-content: center;
  width: 64px;
  margin-left: ${(p) => p.$lead}px;
  padding-top: 1px;
  font-size: 11.3px;
  line-height: 18px;
  white-space: nowrap;
`;
const Notices = styled.div`
  position: relative;
  display: flex;
  align-items: center;
  width: 16px;
  margin-left: 12px;
`;
const NoticeCount = styled.div`
  position: absolute;
  left: 5px;
  top: 17px;
  width: 20px;
  height: 20px;
  border-radius: 50%;
  border: 1px solid #8a8f99;
  background: #2a2c33;
  font-size: 11px;
  font-weight: 600;
  line-height: 18px;
  text-align: center;
`;
const PeekEdge = styled.i`
  width: 1px;
  margin-left: auto;
  margin-right: 4px;
  background: #5b6573;
`;

const WindowsLogo = () => (
  <svg width="16" height="16" viewBox="0 0 16 16" fill="#fff"><path d="M0 2.3 6.5 1.4v6.2H0zM7.3 1.3 16 0v7.6H7.3zM0 8.4h6.5v6.2L0 13.7zM7.3 8.4H16V16l-8.7-1.3z" /></svg>
);
const TaskViewIcon = () => (
  <svg width="17" height="16" viewBox="0 0 17 16" fill="none" stroke="#fff"><path d="M1.5 4.5h9v7h-9zM1.5 0v2.5h9V0M1.5 16v-2.500h9V16M14.5 0v3.5M14.5 8.5V16" /><path d="M13 4.5h3v3h-3z" fill="#fff" stroke="none" /></svg>
);
const CortanaIcon = () => (
  <svg width="16" height="16" viewBox="0 0 16 16"><circle cx="8" cy="8" r="6.8" fill="none" stroke="#fff" strokeWidth="1.9" /></svg>
);
const EdgeIcon = ({ id }: { id: string }) => (
  <svg width="24" height="24" viewBox="0 0 24 24">
    <defs>
      <linearGradient id={`${id}a`} x1="0" y1="0" x2="1" y2=".3"><stop offset="0" stopColor="#2aa8e8" /><stop offset=".55" stopColor="#30c2c8" /><stop offset="1" stopColor="#6ad84f" /></linearGradient>
      <linearGradient id={`${id}b`} x1="0" y1="0" x2="1" y2="1"><stop offset="0" stopColor="#1a8fe0" /><stop offset="1" stopColor="#0d4f9e" /></linearGradient>
    </defs>
    <path d="M.3 10.5C1.5 4 6.5 0 12.5 0 19 0 24 4.5 24 9.800c0 4-3 6.200-6.500 6.200-2.500 0-3.800-.8-3.800-1.700 0-.8 1.300-1.200 1.300-3.300 0-2.500-2.500-4.500-6-4.500-4 0-7 1.500-8.700 4z" fill={`url(#${id}a)`} />
    <path d="M0 12c.5-4.500 4.500-6.500 8.500-6.500 2 0 4 .7 5.200 2C10 7.500 8.300 10 8.300 13c0 4.500 4 7.500 8.500 7.500 2 0 3.700-.5 5-1.300 .4-.2 .7 .1 .5 .5C20.300 22.500 16.500 24 12.500 24 5.500 24 0 18.500 0 12z" fill={`url(#${id}b)`} />
  </svg>
);
const FolderIcon = () => (
  <svg width="22" height="20" viewBox="0 0 22 20">
    <path d="M0 1.500Q0 0 1.500 0H9l2 2.500H0z" fill="#d9962b" /><path d="M0 3h22v16H0z" fill="#fcd462" /><path d="M0 2.500h8l2-1h12V5H0z" fill="#e9a92f" opacity=".7" />
    <path d="M4 20v-7q0-2 2-2h10q2 0 2 2v7h-4v-4H8v4z" fill="#3f96d8" />
  </svg>
);
const MailIcon = () => (
  <svg width="24" height="22" viewBox="0 0 24 22">
    <path d="M0 7 12 0l12 7v4H0z" fill="#0c59a4" /><path d="M0 7h24v15H0z" fill="#28a8ea" /><path d="M24 7v15H4z" fill="#50c8f4" opacity=".8" /><path d="M2 7h20l-10 8z" fill="#f5f5f5" />
  </svg>
);
const BoltSIcon = () => (
  <svg width="12" height="24" viewBox="0 0 12 24"><path d="M10.5 0 0 9.500l5.500 5L3 24l8.500-10.500L6 9z" fill="#fff" /></svg>
);
const CodeIcon = () => (
  <svg width="24" height="24" viewBox="0 0 24 24">
    <path d="M18 0v7L3 19 .3 16.500z" fill="#1273b8" />
    <path d="M18 24v-7L3 5 .3 7.500z" fill="#1b88d4" />
    <path d="M17.500 0 24 2.500v19L17.500 24z" fill="#2ba0ee" />
  </svg>
);
const SlackIcon = () => (
  <svg width="22" height="22" viewBox="0 0 22 22">
    <circle cx="11" cy="11" r="11" fill="#fff" />
    <g fill="none" strokeWidth="2.600" strokeLinecap="round">
      <path d="M9 9V5M5 9h4" stroke="#36c5f0" />
      <path d="M13 9h4M13 5v4" stroke="#2eb67d" /><path d="M13 13h4M13 13v4" stroke="#ecb22e" /><path d="M5 13h4M9 13v4" stroke="#e01e5a" />
    </g>
  </svg>
);
const ExcelIcon = () => (
  <svg width="24" height="22" viewBox="0 0 24 22">
    <path d="M6 1h18v20H6z" fill="#21a366" /><path d="M15 1h9v6.500h-9z" fill="#33c481" /><path d="M6 7.500h9V14H6z" fill="#107c41" /><path d="M6 14h18v7H6z" fill="#185c37" /><path d="M15 14h9V8h-9z" fill="#21a366" />
    <path d="M0 5.500h12v12H0z" fill="#107c41" /><path d="M3.500 8l5 7M8.500 8l-5 7" stroke="#fff" strokeWidth="1.6" />
  </svg>
);
const ChromeIcon = () => (
  <svg width="22" height="22" viewBox="0 0 22 22">
    <circle cx="11" cy="11" r="11" fill="#ffcd40" />
    <path d="M11 0a11 11 0 0 1 9.600 5.600H11L6.300 8.500 1.600 5.300A11 11 0 0 1 11 0z" fill="#e14640" />
    <path d="M1.500 5.400A11 11 0 0 0 10.500 22l4.700-8.200L7 13z" fill="#1da362" />
    <circle cx="11" cy="11" r="5.200" fill="#fff" /><circle cx="11" cy="11" r="4" fill="#4a8cf5" />
  </svg>
);
const ZoomIcon = ({ size = 23 }: { size?: number }) => (
  <svg width={size} height={size} viewBox="0 0 23 23"><rect width="23" height="23" rx="6" fill="#4087fc" /><rect x="4.500" y="7.500" width="9.500" height="8" rx="2" fill="#fff" /><path d="M14.800 10.500l3.700-2.500v7l-3.700-2.500z" fill="#fff" /></svg>
);
const TerminalIcon = () => (
  <svg width="23" height="19" viewBox="0 0 23 19"><path d="M.5 .5h22v18H.5z" fill="#0a0a0a" stroke="#999" /><path d="M1 1h21v2H1z" fill="#ddd" /><text x="3" y="10" fontSize="6" fontFamily="Liberation Mono" fill="#ddd">C:\_</text></svg>
);
const NotepadIcon = () => (
  <svg width="24" height="24" viewBox="0 0 24 24"><path d="M18 3h4l-2 19-4 1z" fill="#c8894a" /><path d="M8 1l13 2-3 20L1 19z" fill="#dceef3" /><path d="M8 2l11 1.500L14 20 1 18z" fill="#5fb7c9" /><path d="M9 5l8 1-2 10-6 2z" fill="#a6dde6" /><path d="M8 0l13 2v1.500L8 2z" fill="#777" /></svg>
);
const PenIcon = () => (
  <svg width="16" height="16" viewBox="0 0 16 16" fill="none" stroke="#fff" strokeWidth="1.2"><path d="M6 12 10 1.500q2.500-1.500 2.500 .8L8.500 13 6 15zM6 9.500c-3 0-5 1.500-5 3.500s2.500 2 5 1M12 9c2-2 4-1 3 .5s-3 2-5 1.500" /></svg>
);

const Apps = ({ id }: { id: string }) => (
  <>
    <TaskApp $open><EdgeIcon id={id} /></TaskApp>
    <TaskApp $open $multi><FolderIcon /></TaskApp>
    <TaskApp><MailIcon /></TaskApp>
    <TaskApp>
      <AmazonTile>
        <svg width="16" height="20" viewBox="0 0 16 20">
          <text x="8" y="13" textAnchor="middle" fontSize="18" fontWeight="700" fontFamily="Open Sans" fill="#221f1f">a</text>
          <path d="M1.500 16q6.500 4 13 0" stroke="#ff9900" strokeWidth="1.5" fill="none" />
        </svg>
      </AmazonTile>
    </TaskApp>
    <TaskApp><FaDropbox size={24} color="#fff" /></TaskApp>
    <TaskApp><BoltSIcon /></TaskApp>
    <TaskApp $open><CodeIcon /></TaskApp>
    <TaskApp $open><SlackIcon /></TaskApp>
    <TaskApp $open $active><ExcelIcon /></TaskApp>
    <TaskApp $open><ChromeIcon /></TaskApp>
    <TaskApp $open $multi><ZoomIcon /></TaskApp>
    <TaskApp $open><TerminalIcon /></TaskApp>
    <TaskApp $open><NotepadIcon /></TaskApp>
  </>
);

const LeftTaskbar = () => (
  <TaskbarRoot $bg="linear-gradient(90deg, #1e3841 0%, #20333f 30%, #1d3046 55%, #1b2947 80%, #1b2540 100%)">
    <SystemKey $w={48}><WindowsLogo /></SystemKey>
    <TaskSearch><Magnifier size={16} color="#222" sw={1.3} />Type here to search</TaskSearch>
    <SystemKey $w={48}><CortanaIcon /></SystemKey>
    <SystemKey $w={50}><TaskViewIcon /></SystemKey>
    <Apps id="l" />
    <BarItem $w={22} $lead={154}>
      <svg width="22" height="22" viewBox="0 0 22 22"><circle cx="10.5" cy="10.5" r="9.8" fill="#1479bf" stroke="#fff" strokeWidth="1.4" /><text x="10" y="16.5" textAnchor="middle" fontSize="16" fontWeight="700" fill="#fff">?</text><circle cx="18" cy="17" r="4.5" fill="#1479bf" /><path d="M17.300 15.500h1.500v4h-1.500zM17.300 13.300h1.500v1.300h-1.500z" fill="#fff" /></svg>
    </BarItem>
    <BarItem $w={12} $lead={9}><svg width="12" height="7" viewBox="0 0 12 7" fill="none" stroke="#fff" strokeWidth="1.3"><path d="M.5 6.500 6 1l5.500 5.500" /></svg></BarItem>
    <BarItem $w={16} $lead={11}><svg width="16" height="10" viewBox="0 0 16 10"><path d="M4 10a4 4 0 0 1 0-6.500 4.500 4.500 0 0 1 8 0A3.500 3.500 0 0 1 13 10z" fill="#e8e8e8" /><path d="M4 10a4 4 0 0 1-1-6l9 6z" fill="#b5bcc6" /></svg></BarItem>
    <BarItem $w={10} $lead={10}><svg width="10" height="16" viewBox="0 0 10 16"><rect x="2.500" y="0" width="5" height="10" rx="1" fill="#fff" /><path d="M.5 6v5h9V6M5 11v4M2.500 15.300h5" stroke="#fff" fill="none" /></svg></BarItem>
    <BarItem $w={16} $lead={12}><svg width="16" height="12" viewBox="0 0 16 12" fill="none" stroke="#fff"><path d="M5 2.500h9.500v8H4V7M0 2.500h2M0 5.500h2M2 1v5.500h3.500V1zM14.500 5h1v3h-1" /><path d="M7 4.500h6v4H7z" fill="#fff" stroke="none" /></svg></BarItem>
    <BarItem $w={13} $lead={11}><svg width="13" height="13" viewBox="0 0 13 13" fill="none" stroke="#fff" strokeWidth="1.2"><path d="M1 12A11 11 0 0 1 12 1M4 12.500A8.500 8.500 0 0 1 12 4.300M7 12.500a5.500 5.500 0 0 1 5-5" /><circle cx="11" cy="11.5" r="1.2" fill="#fff" stroke="none" /></svg></BarItem>
    <BarItem $w={16} $lead={8}><svg width="16" height="13" viewBox="0 0 16 13" fill="none" stroke="#fff" strokeWidth="1.1"><path d="M.5 4.500H3l3.500-3.500v11L3 8.500H.5zM9 4.500q1.200 2 0 4M11.200 2.800q2.200 3.700 0 7.400M13.400 1q3.200 5.500 0 11" /></svg></BarItem>
    <BarItem $w={16} $lead={12}><PenIcon /></BarItem>
    <Clock $lead={8}><span>9:02 PM</span><span>9/28/2020</span></Clock>
    <Notices>
      <svg width="16" height="16" viewBox="0 0 16 16"><path d="M0 0h16v12H8l-4 4v-4H0z" fill="#fff" /><path d="M3 3h10M3 6h10M3 9h6" stroke="#1b2540" strokeWidth="1.2" /></svg>
      <NoticeCount>24</NoticeCount>
    </Notices>
    <PeekEdge />
  </TaskbarRoot>
);

const RightTaskbar = () => (
  <TaskbarRoot $bg="linear-gradient(90deg, #1c2327 0%, #1f3138 25%, #1d2b31 35%, #1c262f 60%, #1c262f 100%)">
    <SystemKey $w={48}><WindowsLogo /></SystemKey>
    <SystemKey $w={48}><Magnifier size={16} color="#fff" sw={1.3} /></SystemKey>
    <SystemKey $w={48}><CortanaIcon /></SystemKey>
    <SystemKey $w={50}><TaskViewIcon /></SystemKey>
    <Apps id="r" />
    <BarItem $w={16} $lead={678}><PenIcon /></BarItem>
    <Clock $lead={12}><span>9:02 PM</span><span>9/28/2020</span></Clock>
  </TaskbarRoot>
);

/* ---------- browser ---------- */

const BrowserTabs = styled.div`
  display: flex;
  align-items: center;
  flex: none;
  height: 32px;
  background: #e7e7e7;
  box-shadow: inset 0 -1px 0 #d2d2d2;
  color: #5f5f5f;
  font-size: 11.3px;
`;
const BrowserTab = styled.div<{ $w: number; $active?: boolean; $divided?: boolean }>`
  display: flex;
  align-items: center;
  flex: none;
  width: ${(p) => p.$w}px;
  height: 32px;
  padding-left: 11px;
  gap: 10px;
  white-space: nowrap;
  ${(p) => p.$divided && css`
    background: linear-gradient(#8f8f8f, #8f8f8f) no-repeat 100% 7px / 1px 20px;
  `}
  ${(p) => p.$active && css`
    background: #f7f7f7;
    border-radius: 6px 6px 0 0;
    box-shadow: 0 0 3px rgba(0,0,0,.25);
    clip-path: inset(-4px -4px 0 -4px);
    color: #333;
  `}
`;
const TabText = styled.div<{ $fade?: boolean }>`
  width: 173px;
  overflow: hidden;
  ${(p) => p.$fade && css`mask-image: linear-gradient(90deg, #000 86%, transparent 101%);`}
`;
const PageIcon = () => (
  <svg width="16" height="16" viewBox="0 0 16 16" fill="none" stroke="#555" strokeWidth="1.2"><path d="M2.5 .6H10L14 4.5v10.9H2.5zM10 .6v4h4" /></svg>
);
const FoxIcon = () => (
  <svg width="17" height="16" viewBox="0 0 17 16"><path d="M8.5 15.500 0 9l1-3h4.500zM8.5 15.500 17 9l-1-3h-4.500z" fill="#fc6d26" /><path d="M8.5 15.500 5.300 6h6.400z" fill="#e24329" /><path d="M1 6 3 0l2.500 6zM16 6l-2-6-2.500 6z" fill="#e24329" /><path d="M8.5 15.500 0 9l1-3zM8.5 15.500 17 9l-1-3z" fill="#fca326" /></svg>
);
const Toolbar = styled.div`
  display: flex;
  align-items: center;
  flex: none;
  height: 38px;
  padding-left: 19px;
  background: #f7f7f7;
`;
const Address = styled.div`
  display: flex;
  align-items: center;
  width: 1220px;
  height: 30px;
  margin: 1px 0 0 21px;
  padding-left: 16px;
  background: #fff;
  border-radius: 4px;
  box-shadow: 0 0 2px rgba(0,0,0,.12);
  color: #767676;
  font-size: 15.2px;
  b { font-weight: 400; color: #111; }
`;
const Bookmarks = styled.div`
  display: flex;
  align-items: center;
  flex: none;
  height: 33px;
  padding: 0 0 4px 14px;
  background: #f7f7f7;
  border-bottom: 1px solid #cfcfcf;
  color: #222;
  font-size: 11.3px;
`;
const Bookmark = styled.div<{ $w: number }>`
  display: flex;
  align-items: center;
  flex: none;
  gap: 8px;
  width: ${(p) => p.$w}px;
  white-space: nowrap;
  letter-spacing: -0.1px;
`;
const StackIcon = ({ color = '#f48024', base = '#bcbbbb' }: { color?: string; base?: string }) => (
  <svg width="16" height="16" viewBox="0 0 16 16" fill="none"><path d="M2 10v5h10v-5" stroke={base} strokeWidth="1.3" /><path d="M4 12.800h6M4.200 10.300l6 .8M4.800 7.500l5.700 1.900M6.500 4.600l4.800 3.600M9 1.800l3.500 5M12.300 .5l.9 5.500" stroke={color} strokeWidth="1.2" /></svg>
);
const DriveIcon = () => (
  <svg width="16" height="15" viewBox="0 0 16 15"><path d="M5.300 1 0 10l2.600 4.500L8 5.500z" fill="#1aa260" /><path d="M5.300 1h5.400L16 10h-5.300z" fill="#ffcf48" /><path d="M5.300 10H16l-2.600 4.500H2.600z" fill="#4688f4" /></svg>
);
const HLTile = styled.div`
  display: flex;
  width: 16px;
  height: 16px;
  background: #fff;
  color: #7a0d14;
  font: 700 13px/11px "Liberation Sans", sans-serif;
  letter-spacing: -1px;
  span { padding-top: 5px; margin-left: -1px; }
`;
const PythonIcon = () => (
  <>
    <svg width="0" height="0">
      <defs><linearGradient id="py" x1="0" y1="0" x2="0.15" y2="1"><stop offset=".5" stopColor="#3b79ac" /><stop offset=".5" stopColor="#ffd43b" /></linearGradient></defs>
    </svg>
    <FaPython size={17} fill="url(#py)" />
  </>
);
const PythonMark = styled.div`
  display: flex;
  width: 17px;
`;

const Browser = () => (
  <>
    <BrowserTabs>
      <BrowserTab $w={247} $divided>
        <BarItem $w={16} $lead={6}><PageIcon /></BarItem>
        <TabText>Dashboard | Bootcamp Spot</TabText>
        <BarItem $w={8} $lead={0}><CrossIcon color="#555" size={8} sw={1.2} /></BarItem>
      </BrowserTab>
      <BrowserTab $w={239} $divided>
        <ZoomIcon size={16} />
        <TabText>Post Attendee - Zoom</TabText>
        <BarItem $w={8} $lead={-1}><CrossIcon color="#555" size={8} sw={1.2} /></BarItem>
      </BrowserTab>
      <BrowserTab $w={238}>
        <ZoomIcon size={16} />
        <TabText>Post Attendee - Zoom</TabText>
        <BarItem $w={8} $lead={-1}><CrossIcon color="#555" size={8} sw={1.2} /></BarItem>
      </BrowserTab>
      <BrowserTab $w={239} $active>
        <FaGithub size={16} color="#24292e" />
        <TabText $fade>Upload files · zacohen/ZachCohenVBAHW</TabText>
        <BarItem $w={8} $lead={-1}><CrossIcon color="#222" size={8} sw={1.4} /></BarItem>
      </BrowserTab>
      <BrowserTab $w={240} $divided>
        <FoxIcon />
        <TabText $fade>01-Lesson-Plans/03-Python/3/Activities</TabText>
        <BarItem $w={8} $lead={-1}><CrossIcon color="#555" size={8} sw={1.2} /></BarItem>
      </BrowserTab>
      <BarItem $w={13} $lead={9}><svg width="13" height="13" viewBox="0 0 13 13"><path d="M0 6.500h13M6.500 0v13" stroke="#444" /></svg></BarItem>
      <BarItem $w={10} $lead={255}><MinusIcon color="#888" /></BarItem>
      <BarItem $w={10} $lead={36}><RestoreIcon color="#888" /></BarItem>
      <BarItem $w={10} $lead={36}><CrossIcon color="#888" /></BarItem>
    </BrowserTabs>
    <Toolbar>
      <BarItem $w={18}><svg width="17" height="15" viewBox="0 0 17 15" fill="none" stroke="#111" strokeWidth="1.3"><path d="M17 7.500H1M8 .5l-7 7 7 7" /></svg></BarItem>
      <BarItem $w={17} $lead={27}><svg width="17" height="15" viewBox="0 0 17 15" fill="none" stroke="#c8c8c8" strokeWidth="1.2"><path d="M0 7.500h16M9 .5l7 7-7 7" /></svg></BarItem>
      <BarItem $w={16} $lead={27}><svg width="16" height="16" viewBox="0 0 16 16" fill="none" stroke="#222" strokeWidth="1.3"><path d="M3 2.500A7.200 7.200 0 1 0 12 2M2 .5h4v4" /></svg></BarItem>
      <BarItem $w={15} $lead={28}><svg width="15" height="16" viewBox="0 0 15 16" fill="none" stroke="#222" strokeWidth="1.2"><path d="M1.500 15.400V6.500l6-5.500 6 5.500v8.900h-4V10h-4v5.400z" /></svg></BarItem>
      <Address>
        <svg width="12" height="16" viewBox="0 0 12 16" fill="none" stroke="#555" strokeWidth="1.1"><path d="M.6 7h10.800v8.400H.6zM2.500 7V4a3.500 3.500 0 0 1 7 0v3" /></svg>
        <BarItem $w={1137} $lead={16} $start>https://<b>github.com</b>/zacohen/ZachCohenVBAHW/upload</BarItem>
        <BarItem $w={16} $lead={12}><svg width="16" height="16" viewBox="0 0 16 16" fill="none" stroke="#777"><path d="M9 11.500 7.500 10.500 3 13.800l1.500-5.500L.8 5.500h4.700L7.500 .8l2 4.700h4.700L11 8.200M12.500 9v7M9 12.500h7" /></svg></BarItem>
      </Address>
      <BarItem $w={17} $lead={20}><svg width="17" height="16" viewBox="0 0 17 16" fill="none" stroke="#222" strokeWidth="1.2"><path d="M9.500 12 7.500 10.500 3 13.800l1.500-5.500L.8 5.500h4.700L7.500 .8l2 4.700H16M10 9h6.500M11 12.500h5.500" /></svg></BarItem>
      <BarItem $w={16} $lead={28}><svg width="16" height="16" viewBox="0 0 16 16" fill="none" stroke="#222" strokeWidth="1.2"><path d="M4.500 4h10.900v11.400H4.500zM10 6.500v6.500M6.700 9.700h6.500M3 11.500 .6 2.800 10.500 .6l.8 3" /></svg></BarItem>
      <BarItem $w={23} $lead={26}><svg width="23" height="23" viewBox="0 0 23 23"><circle cx="11.500" cy="11.500" r="11.500" fill="#d2d0ce" /><circle cx="11.500" cy="8.500" r="5" fill="#8a8886" /><path d="M3.500 18.500q2-4 8-4t8 4a11 11 0 0 1-16 0z" fill="#8a8886" /></svg></BarItem>
      <BarItem $w={16} $lead={27}><svg width="16" height="3" viewBox="0 0 16 3" fill="#333"><circle cx="2" cy="1.500" r="1.100" /><circle cx="8" cy="1.500" r="1.100" /><circle cx="14" cy="1.500" r="1.100" /></svg></BarItem>
    </Toolbar>
    <Bookmarks>
      <Bookmark $w={154}><StackIcon />User Zachary Cohe...</Bookmark>
      <Bookmark $w={78}><FaGithub size={16} color="#24292e" />GitHub</Bookmark>
      <Bookmark $w={150}><StackIcon color="#555" base="#777" />Meta Stack Overflow</Bookmark>
      <Bookmark $w={154}><DriveIcon />My Drive - Google...</Bookmark>
      <Bookmark $w={154}><FoxIcon />The-Coding-Bootca...</Bookmark>
      <Bookmark $w={154}><HLTile>H<span>L</span></HLTile>Excel VBA Program...</Bookmark>
      <Bookmark $w={154}><PythonMark><PythonIcon /></PythonMark>Learn Python - Free...</Bookmark>
      <Bookmark $w={154}><FaGithub size={16} color="#1b1f23" />Resources to learn...</Bookmark>
      <Bookmark $w={154}>
        <svg width="16" height="14" viewBox="0 0 16 14"><path d="M1 1h9v12H1z" fill="none" stroke="#1f4056" strokeWidth="1.6" /><path d="M12 11.500h4v1.500h-4z" fill="#1f4056" /><text x="5.500" y="10" textAnchor="middle" fontSize="9" fontWeight="700" fill="#1f4056">c</text></svg>
        Learn Git | Codecad...
      </Bookmark>
      <Bookmark $w={154}>
        <svg width="16" height="14" viewBox="0 0 16 14" fill="none" stroke="#ec5252" strokeWidth="2.200" strokeLinecap="round"><path d="M1.500 4Q4.500 .5 4.500 3L3.300 9.500q0 3 2.500 1L8.800 3M11 3.500q1.500-1.500 1.500 0l.2 6q.3 2 2 .8M11 3.500 8.500 11" /></svg>
        Online Courses - Le...
      </Bookmark>
    </Bookmarks>
  </>
);

/* ---------- repository upload page ---------- */

const PageView = styled.div`
  display: flex;
  flex: none;
  height: 757px;
  overflow: hidden;
  background: #fff;
`;
const Container = styled.main`
  width: 1216px;
  margin: 19px 183px 0 184px;
  flex: none;
  color: #24292e;
  font-size: 13.2px;
`;
const DropZone = styled.section`
  display: flex;
  flex-direction: column;
  align-items: center;
  height: 297px;
  padding-top: 80px;
  border: 1px solid #e1e4e8;
  border-radius: 6px;
`;
const DropIcons = styled.div`
  display: flex;
  align-items: center;
  gap: 10px;
`;
const DropTitle = styled.h2`
  margin: 9px 0 0;
  font-size: 22.65px;
  font-weight: 600;
  line-height: 32px;
  white-space: nowrap;
`;
const DropHint = styled.p`
  margin: 7px 0 0;
  font-size: 17px;
  line-height: 24px;
  color: #444d56;
  a { color: #0366d6; }
`;
const FileRow = styled.section`
  display: flex;
  align-items: center;
  height: 55px;
  margin-top: 16px;
  padding: 0 19px 0 18px;
  border: 1px solid #e1e4e8;
  border-radius: 6px;
  span { flex: 1; padding: 1px 0 0 10px; color: #3c4248; letter-spacing: -0.05px; }
`;
const CommitArea = styled.section`
  display: flex;
  gap: 16px;
  margin-top: 20px;
`;
const CommitColumn = styled.div`
  flex: 1;
`;
const CommitCard = styled.div`
  position: relative;
  height: 226px;
  padding: 16px 16px 15px;
  border: 1px solid #e1e4e8;
  border-radius: 6px;
  h3 { margin: 0 0 8px; font-size: 18.9px; font-weight: 600; line-height: 32px; letter-spacing: -0.05px; }
`;
const CommitNotch = styled.i`
  position: absolute;
  left: -6px;
  top: 14px;
  width: 11px;
  height: 11px;
  background: #fff;
  border: solid #e1e4e8;
  border-width: 0 0 1px 1px;
  transform: rotate(45deg);
`;
const TextField = styled.div<{ $h: number }>`
  display: flex;
  justify-content: space-between;
  height: ${(p) => p.$h}px;
  margin-bottom: 10px;
  padding: 0 1px 1px 12px;
  background: #fafbfc;
  border: 1px solid #dfe2e9;
  border-radius: 6px;
  color: #757a81;
  line-height: ${(p) => (p.$h > 50 ? 39 : 31)}px;
  svg { align-self: flex-end; }
`;
const Actions = styled.div`
  display: flex;
  gap: 4px;
  margin-top: 8px;
`;
const ActionButton = styled.div<{ $w: number; $primary?: boolean }>`
  display: flex;
  align-items: center;
  justify-content: center;
  width: ${(p) => p.$w}px;
  height: 32px;
  border-radius: 6px;
  border: 1px solid ${(p) => (p.$primary ? '#2b944a' : '#d9dbde')};
  background: ${(p) => (p.$primary ? '#2ea44f' : '#fafbfc')};
  color: ${(p) => (p.$primary ? '#fff' : '#cb2431')};
  font-weight: 600;
  letter-spacing: ${(p) => (p.$primary ? '0' : '-0.3px')};
`;
const FooterRule = styled.div`
  display: flex;
  justify-content: center;
  width: 1248px;
  margin: 40px 0 0 -16px;
  padding-top: 40px;
  border-top: 1px solid #eaecef;
`;
const PageScroll = styled.div`
  display: flex;
  flex-direction: column;
  align-items: center;
  justify-content: space-between;
  width: 17px;
  padding: 6px 0;
  background: #f1f1f1;
`;
const PageThumb = styled.div`
  width: 13px;
  height: 519px;
  margin-top: 106px;
  background: #c1c1c1;
`;

const FileOutline = ({ w, h, cut, children }: { w: number; h: number; cut: number; children: React.ReactNode }) => (
  <svg width={w} height={h} viewBox={`0 0 ${w} ${h}`} fill="none" stroke="#6e6e6e" strokeWidth="2">
    <path d={`M1 1H${w - cut}L${w - 1} ${cut}V${h - 1}H1z`} />
    {children}
  </svg>
);

const UploadPage = () => (
  <PageView>
    <Container>
      <DropZone>
        <DropIcons>
          <FileOutline w={24} h={28} cut={7}>
            <path d="M8.500 3v12" strokeDasharray="2 2" /><path d="M10.500 5v9" strokeDasharray="2 2" /><path d="M7 21.500v-3.500l2.500-2 3.500 2v3.500z" strokeWidth="1.5" />
          </FileOutline>
          <FileOutline w={36} h={42} cut={11}>
            <path d="M6.500 7v28H30M12 31V11M18 31V17M24 31V21" strokeWidth="2.500" />
          </FileOutline>
          <FileOutline w={44} h={52} cut={13}>
            <path d="M18.500 20 10 28l8.500 8.500M25.500 20l8.500 8-8.500 8.500" strokeWidth="3" />
          </FileOutline>
          <FileOutline w={36} h={42} cut={11}>
            <path d="M6 10h12M6 18h21M6 23.500h21M6 28.500h21M6 33.500h21" />
          </FileOutline>
          <FileOutline w={24} h={28} cut={7}>
            <path d="M3 25C9 20 13 11 9.500 4 8 10 15 18 22 18 14 16 6 19 3 25z" strokeWidth="1.6" />
          </FileOutline>
        </DropIcons>
        <DropTitle>Drag additional files here to add them to your repository</DropTitle>
        <DropHint>Or <a>choose your files</a></DropHint>
      </DropZone>
      <FileRow>
        <svg width="12" height="15" viewBox="0 0 12 15" fill="none" stroke="#24292e" strokeWidth="1.5"><path d="M.8 .8h6.500L11.200 5v9.200H.8zM7 .8v4.400h4" /></svg>
        <span>VBA HW TO UPLOAD.txt</span>
        <CrossIcon color="#24292e" size={9} sw={2} />
      </FileRow>
      <CommitArea>
        <svg width="48" height="48" viewBox="0 0 48 48">
          <clipPath id="avatar"><circle cx="24" cy="24" r="24" /></clipPath>
          <g clipPath="url(#avatar)"><path d="M0 0h48v48H0z" fill="#f0f0f0" /><path d="M12 4h8v8h8V4h8v8h-8v8h-8v-8h-8zM4 28h40v8h-8v8H12v-8H4z" fill="#99e694" /></g>
        </svg>
        <CommitColumn>
          <CommitCard>
            <CommitNotch />
            <h3>Commit changes</h3>
            <TextField $h={32}>Add files via upload</TextField>
            <TextField $h={100}>
              Add an optional extended description...
              <svg width="10" height="10" viewBox="0 0 10 10" stroke="#555" fill="none"><path d="M1 9l8-8M5 9l4-4" /></svg>
            </TextField>
          </CommitCard>
          <Actions>
            <ActionButton $w={140} $primary>Commit changes</ActionButton>
            <ActionButton $w={76}>Cancel</ActionButton>
          </Actions>
        </CommitColumn>
      </CommitArea>
      <FooterRule>
        <svg width="24" height="24" viewBox="0 0 24 24"><circle cx="12" cy="12" r="12" fill="#d1d5da" /></svg>
      </FooterRule>
    </Container>
    <PageScroll>
      <svg width="8" height="5" viewBox="0 0 8 5"><path d="M4 0l4 5H0z" fill="#505050" /></svg>
      <PageThumb />
      <svg width="8" height="5" viewBox="0 0 8 5"><path d="M4 5 0 0h8z" fill="#505050" /></svg>
    </PageScroll>
  </PageView>
);

export default function App() {
  return (
    <>
      <GlobalStyle />
      <Desktop>
        <Monitor>
          <ExcelTitle />
          <ExcelRibbon />
          <Formula />
          <Worksheet />
          <ExcelFooter />
          <LeftTaskbar />
        </Monitor>
        <Monitor>
          <Browser />
          <UploadPage />
          <RightTaskbar />
        </Monitor>
      </Desktop>
    </>
  );
}
